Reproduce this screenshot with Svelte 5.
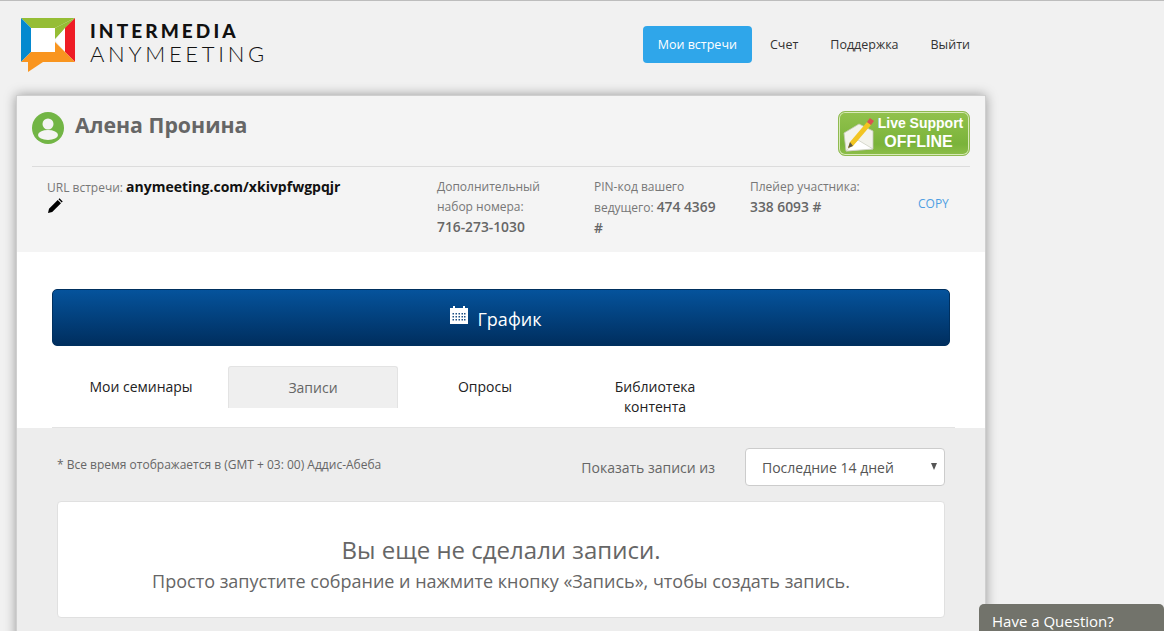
<script>
	const tabs = [
		{ label: 'Мои семинары' },
		{ label: 'Записи', active: true },
		{ label: 'Опросы' },
		{ label: 'Библиотека контента' }
	];
</script>

<div class="page">
	<header class="top">
		<div class="logo">
			<svg width="56" height="56" viewBox="0 0 56 56">
				<polygon points="1,0 55,0 35,10 11,10" fill="#95bd35" />
				<polygon points="55,0 35,21 35,10" fill="#95bd35" />
				<polygon points="1,0 11,10 11,34 1,44" fill="#0489cf" />
				<polygon points="55,0 55,44 45,34 45,10" fill="#ee1c25" />
				<polygon points="35,22 45,10 45,34" fill="#fff" />
				<polygon points="11,34 35,34 35,24 55,44 1,44" fill="#f9951f" />
				<polygon points="8,44 23,44 8,54" fill="#f9951f" />
				<rect x="11" y="10" width="24" height="24" fill="#fff" />
			</svg>
			<div class="logo-text">
				<div class="brand-a">INTERMEDIA</div>
				<div class="brand-b">ANYMEETING</div>
			</div>
		</div>
		<nav>
			<a class="current" href="#top">Мои встречи</a>
			<a class="schet" href="#top">Счет</a>
			<a class="help" href="#top">Поддержка</a>
			<a class="out" href="#top">Выйти</a>
		</nav>
	</header>

	<main class="card">
		<section class="account">
			<div class="name-row">
				<svg class="avatar" width="32" height="32" viewBox="0 0 32 32">
					<circle cx="16" cy="16" r="16" fill="#72b545" />
					<circle cx="16" cy="12" r="5.500" fill="#f4f4f4" />
					<ellipse cx="16" cy="23" rx="10" ry="5" fill="#f4f4f4" />
				</svg>
				<h1>Алена Пронина</h1>
				<div class="live">
					<svg width="34" height="36" viewBox="0 0 34 36">
						<polygon points="1,17 16,8 30,15 30,33 3,35" fill="#f3f3ec" stroke="#c5c9b8" stroke-width=".8" />
						<polygon points="3,35 15,24 30,33" fill="#fff" stroke="#c9ccbd" stroke-width=".7" />
						<polygon points="5,32 7,26 24,6 28,9 10,30" fill="#f2c521" />
						<polygon points="24,6 27,2 31,5 28,9" fill="#d9534f" />
						<polygon points="5,32 7,26 10,30" fill="#5f5a46" />
					</svg>
					<div class="live-text">
						<div class="live-a">Live Support</div>
						<div class="live-b">OFFLINE</div>
					</div>
				</div>
			</div>
			<div class="details">
				<div class="url">
					URL встречи: <b>anymeeting.com/xkivpfwgpqjr</b>
					<svg class="pencil" width="16" height="16" viewBox="0 0 16 16">
						<path d="M1 15l1-4.200L10.700 2l3.300 3.300L5.200 14zM11.500 1.300l1-1 3.200 3.200-1 1z" fill="#000" />
					</svg>
				</div>
				<div class="col dial">Дополнительный набор номера: <b>716-273-1030</b></div>
				<div class="col pin">PIN-код вашего ведущего: <b>474 4369 #</b></div>
				<div class="col player">Плейер участника: <b>338 6093 #</b></div>
				<a class="copy" href="#top">COPY</a>
			</div>
		</section>

		<section class="middle">
			<button class="schedule" type="button">
				<svg width="18" height="19" viewBox="0 0 18 19">
					<path d="M0 3h3V1h2v2h8V1h2v2h3v16H0z" fill="#fff" />
					<g fill="#1d4f84">
						{#each [8, 11, 14] as y}
							{#each [2.500, 5.500, 8.500, 11.500, 14] as x}
								<rect {x} {y} width="1.500" height="1.500" />
							{/each}
						{/each}
					</g>
				</svg>
				<span>График</span>
			</button>
			<div class="tabs">
				{#each tabs as tab}
					<div class="tab" class:active={tab.active}>{tab.label}</div>
				{/each}
			</div>
		</section>

		<section class="records">
			<div class="filter">
				<p class="tz">* Все время отображается в (GMT + 03: 00) Аддис-Абеба</p>
				<label for="range">Показать записи из</label>
				<div class="select">
					<select id="range">
						<option>Последние 14 дней</option>
					</select>
					<span class="arrow"></span>
				</div>
			</div>
			<div class="empty">
				<h2>Вы еще не сделали записи.</h2>
				<p>Просто запустите собрание и нажмите кнопку «Запись», чтобы создать запись.</p>
			</div>
		</section>
	</main>

	<div class="question">Have a Question?</div>
</div>

<style>
	:global(body) {
		background: #f1f1f1;
		font-family: 'Open Sans', sans-serif;
	}

	.page {
		position: relative;
		height: 630px;
		overflow: hidden;
		border-top: 1px solid #bdbdbd;
	}

	.top {
		display: flex;
		justify-content: space-between;
		width: 971px;
		height: 94px;
		box-sizing: border-box;
		padding: 17px 0 0 20px;
	}

	.logo {
		display: flex;
		gap: 14px;
	}

	.logo-text {
		margin-top: 2px;
		font-family: 'Lato', sans-serif;
		color: #111;
	}

	.brand-a {
		font-size: 19px;
		line-height: 22px;
		font-weight: 900;
		letter-spacing: 3.100px;
	}

	.brand-b {
		font-size: 22px;
		line-height: 24px;
		font-weight: 300;
		letter-spacing: 3.700px;
	}

	nav {
		display: flex;
		align-items: center;
		height: 37px;
		margin-top: 8px;
		font-size: 12.500px;
	}

	nav a {
		color: #333;
		text-decoration: none;
	}

	nav .current {
		background: #2fa6ea;
		color: #fff;
		border-radius: 4px;
		padding: 0 15px;
		line-height: 37px;
	}

	.schet {
		margin-left: 18px;
	}

	.help {
		margin-left: 32px;
	}

	.out {
		margin-left: 32px;
		margin-right: 1px;
	}

	.card {
		width: 970px;
		margin-left: 16px;
		background: #fff;
		border: 1px solid #cfcfcf;
		border-bottom: 0;
		box-sizing: border-box;
		box-shadow: 0 0 11px rgba(0, 0, 0, 0.38);
	}

	.account {
		background: #f4f4f4;
		padding: 0 15px;
		height: 156px;
	}

	.name-row {
		display: flex;
		align-items: flex-start;
		height: 71px;
		box-sizing: border-box;
		padding-top: 16px;
		border-bottom: 1px solid #dcdcdc;
	}

	.avatar {
		flex: none;
	}

	h1 {
		flex: 1;
		margin: -2px 0 0 11px;
		font-size: 21.300px;
		line-height: 30px;
		font-weight: 700;
		color: #666;
	}

	.live {
		display: flex;
		width: 132px;
		height: 45px;
		box-sizing: border-box;
		margin-top: -1px;
		padding: 2px 4px;
		border: 1px solid #8fba50;
		border-radius: 7px;
		background: linear-gradient(#92c24d, #7ab33a 75%, #8dbe49);
		box-shadow: inset 0 0 0 1px #d8e9b8;
		color: #fff;
		font-family: 'Liberation Sans', sans-serif;
		font-weight: 700;
		text-align: center;
	}

	.live svg {
		flex: none;
		margin-top: 2px;
	}

	.live-text {
		flex: 1;
		margin-left: -1px;
		white-space: nowrap;
	}

	.live-a {
		font-size: 14px;
		line-height: 18px;
	}

	.live-b {
		margin-right: 4px;
		font-size: 16px;
		line-height: 19px;
	}

	.details {
		display: grid;
		grid-template-columns: 390px 157px 156px 168px auto;
		padding: 10px 0 0 15px;
		font-size: 12px;
		line-height: 20px;
		color: #777;
	}

	.url b {
		font-size: 14px;
		color: #111;
	}

	.pencil {
		display: block;
	}

	.col {
		width: 125px;
	}

	.pin {
		width: 130px;
	}

	.col b {
		font-size: 13.800px;
		color: #666;
		font-weight: 600;
	}

	.dial b {
		white-space: nowrap;
	}

	.copy {
		margin-top: 17px;
		color: #4f9fe3;
		text-decoration: none;
	}

	.middle {
		padding: 37px 30px 0 35px;
	}

	.schedule {
		display: flex;
		justify-content: center;
		align-items: center;
		gap: 10px;
		width: 898px;
		height: 57px;
		padding: 3px 11px 0 0;
		border: 1px solid #00305f;
		border-radius: 5px;
		background: linear-gradient(#05539c, #002e5e);
		color: #fff;
		font-family: inherit;
		font-size: 18px;
	}

	.schedule svg {
		margin-top: -10px;
	}

	.tabs {
		display: flex;
		height: 61px;
		margin-top: 20px;
		padding-left: 4px;
		border-bottom: 1px solid #e3e3e3;
		font-size: 14px;
		color: #222;
	}

	.tab {
		box-sizing: border-box;
		width: 170px;
		height: 42px;
		padding: 11px 25px 0;
		line-height: 20px;
		text-align: center;
	}

	.tab.active {
		margin: 0 2px;
		background: #efefef;
		border: 1px solid #e3e3e3;
		border-bottom: 0;
		border-radius: 3px 3px 0 0;
		color: #666;
	}

	.records {
		background: #ededed;
		height: 210px;
		padding: 20px 40px 0;
	}

	.filter {
		display: flex;
		align-items: center;
		height: 38px;
	}

	.tz {
		flex: 1;
		margin: 0;
		font-size: 12px;
		color: #666;
		position: relative;
		top: -3px;
	}

	label {
		margin-right: 30px;
		font-size: 14px;
		color: #666;
	}

	.select {
		position: relative;
		width: 200px;
	}

	select {
		appearance: none;
		width: 100%;
		height: 38px;
		padding: 0 16px;
		background: #fff;
		border: 1px solid #ccc;
		border-radius: 4px;
		font-family: inherit;
		font-size: 14px;
		color: #555;
	}

	.arrow {
		position: absolute;
		top: 15px;
		right: 8px;
		border: 3.500px solid transparent;
		border-top: 7px solid #555;
		border-bottom: 0;
	}

	.empty {
		height: 117px;
		box-sizing: border-box;
		margin-top: 15px;
		padding-top: 31px;
		background: #fff;
		border: 1px solid #e0e0e0;
		border-radius: 4px;
		text-align: center;
		color: #666;
	}

	h2 {
		margin: 0;
		font-size: 24px;
		line-height: 33px;
		font-weight: 400;
	}

	.empty p {
		margin: 4px 0 0;
		font-size: 18px;
		line-height: 23px;
	}

	.question {
		position: absolute;
		left: 979px;
		bottom: 0;
		width: 185px;
		height: 27px;
		box-sizing: border-box;
		padding: 7px 0 0 13px;
		background: #72736b;
		border-radius: 5px 5px 0 0;
		color: #fff;
		font-size: 15px;
		line-height: 20px;
		white-space: nowrap;
		overflow: hidden;
	}
</style>
